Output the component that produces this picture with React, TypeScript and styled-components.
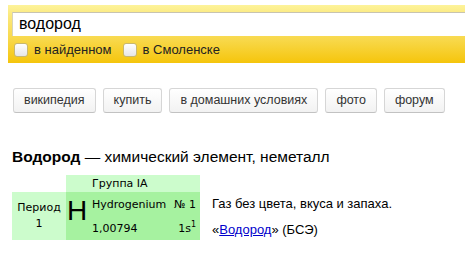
import styled, { createGlobalStyle } from "styled-components";

const Global = createGlobalStyle`
  body {
    margin: 0;
    background: #ffffff;
    font-family: "Liberation Sans", Arial, sans-serif;
  }
`;

const buttons = ["википедия", "купить", "в домашних условиях", "фото", "форум"];

const App = () => {
  return (
    <>
      <Global />
      <Page>
        <SearchBar>
          <SearchInput>водород</SearchInput>
          <Options>
            <Option>
              <Check />
              <span>в найденном</span>
            </Option>
            <Option>
              <Check />
              <span>в Смоленске</span>
            </Option>
          </Options>
        </SearchBar>

        <Buttons>
          {buttons.map((b) => (
            <Button key={b}>{b}</Button>
          ))}
        </Buttons>

        <Title>
          <b>Водород</b> — химический элемент, неметалл
        </Title>

        <Card>
          <Element>
            <tbody>
              <tr>
                <td />
                <GroupCell colSpan={2}>Группа IA</GroupCell>
              </tr>
              <tr>
                <PeriodCell rowSpan={2}>
                  Период
                  <br />1
                </PeriodCell>
                <SymbolCell rowSpan={2}>H</SymbolCell>
                <DataCell>
                  <DataRow>
                    <span>Hydrogenium</span>
                    <span>№ 1</span>
                  </DataRow>
                </DataCell>
              </tr>
              <tr>
                <DataCell>
                  <DataRow>
                    <span>1,00794</span>
                    <span>
                      1s<sup>1</sup>
                    </span>
                  </DataRow>
                </DataCell>
              </tr>
            </tbody>
          </Element>
          <Info>
            <p>Газ без цвета, вкуса и запаха.</p>
            <p>
              «<a href="#">Водород</a>» (БСЭ)
            </p>
          </Info>
        </Card>
      </Page>
    </>
  );
};

export default App;

const Page = styled.div`
  padding-top: 5px;
`;

const SearchBar = styled.div`
  margin-left: 8px;
  padding: 7px 0 0 4px;
  height: 51px;
  background: linear-gradient(#fdf39a 0%, #fbe77a 20%, #f8d84a 60%, #f5c50c 100%);
`;

const SearchInput = styled.div`
  height: 24px;
  box-sizing: border-box;
  border-top: 1px solid #c8c4b0;
  border-left: 1px solid #d8d4b8;
  background: #ffffff;
  padding-left: 6px;
  font-size: 16px;
  line-height: 22px;
  color: #000000;
`;

const Options = styled.div`
  display: flex;
  gap: 11px;
  padding: 6px 0 0 2px;
`;

const Option = styled.label`
  display: flex;
  align-items: center;
  gap: 6px;
  font-size: 13px;
  color: #222222;
`;

const Check = styled.span`
  width: 12px;
  height: 12px;
  border: 1px solid #c8b870;
  border-radius: 3px;
  background: linear-gradient(#ffffff, #e6e6e6);
`;

const Buttons = styled.div`
  display: flex;
  gap: 7px;
  padding: 25px 0 0 13px;
`;

const Button = styled.div`
  flex-shrink: 0;
  white-space: nowrap;
  height: 25px;
  box-sizing: border-box;
  padding: 0 10px;
  border: 1px solid #d6d6d6;
  border-bottom-color: #c2c2c2;
  border-radius: 3px;
  background: linear-gradient(#ffffff, #f2f2f2);
  font-size: 12.5px;
  line-height: 23px;
  color: #333333;
`;

const Title = styled.div`
  padding: 35px 0 0 12px;
  font-size: 15.5px;
  color: #000000;
  line-height: 18px;
`;

const Card = styled.div`
  display: flex;
  align-items: flex-start;
  gap: 12px;
  padding: 9px 0 0 12px;
`;

const Element = styled.table`
  border-collapse: collapse;
  font-family: "DejaVu Sans", Verdana, sans-serif;
  font-size: 11px;
  color: #000000;
  td {
    padding: 0;
  }
`;

const GroupCell = styled.td`
  background: #ccfccc;
  height: 17px;
  && {
    padding-left: 26px;
  }
`;

const PeriodCell = styled.td`
  background: #ccfccc;
  width: 54px;
  text-align: center;
  line-height: 16px;
`;

const SymbolCell = styled.td`
  background: #a6f2a0;
  width: 22px;
  font-family: "Liberation Sans", Arial, sans-serif;
  font-size: 28px;
  line-height: 1;
  text-align: center;
  vertical-align: top;
  && {
    padding-top: 5px;
  }
`;

const DataCell = styled.td`
  background: #a6f2a0;
  width: 104px;
  height: 24px;
  && {
    padding: 0 4px;
  }
`;

const DataRow = styled.div`
  display: flex;
  justify-content: space-between;
  white-space: nowrap;
  sup {
    font-size: 8px;
    line-height: 0;
  }
`;

const Info = styled.div`
  padding-top: 21px;
  font-size: 13px;
  color: #000000;
  p {
    margin: 0 0 11px;
  }
  a {
    color: #0000cc;
  }
`;
